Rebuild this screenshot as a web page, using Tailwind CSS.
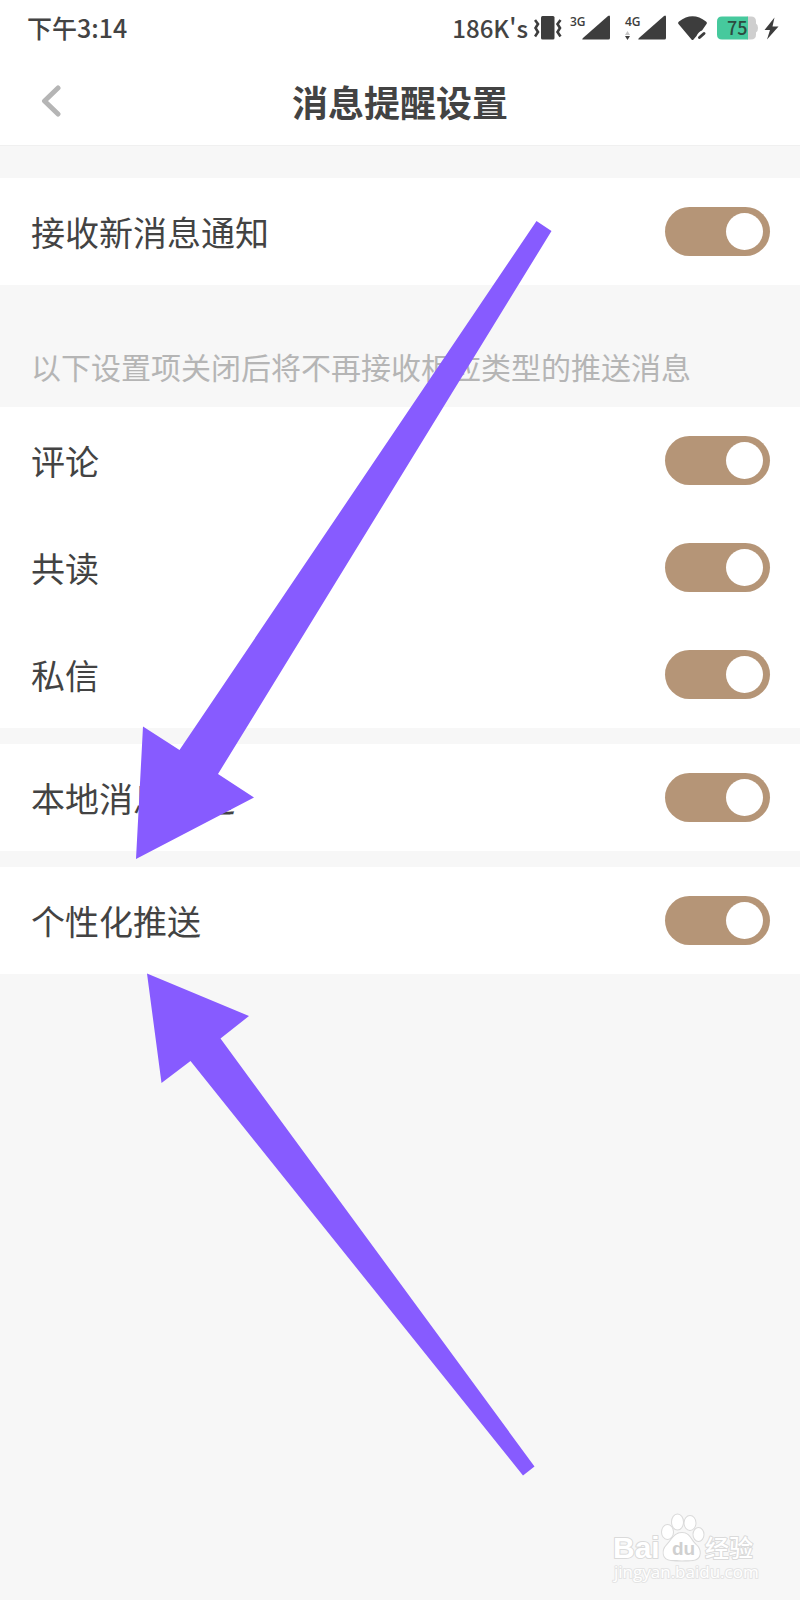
<!DOCTYPE html>
<html lang="zh-CN">
<head>
    <meta charset="UTF-8">
    <meta name="viewport" content="width=device-width, initial-scale=1.0">
    <title>消息提醒设置</title>
    <script src="https://cdn.jsdelivr.net/npm/@tailwindcss/browser@4"></script>
</head>
<body class="relative min-h-screen overflow-x-hidden bg-[#f7f7f7] font-['Noto_Sans_CJK_SC',sans-serif] text-[#434343]">
    <!-- Status bar -->
    <div class="flex h-14 items-center justify-between bg-white pr-[21px] pl-[27px] text-[25px] font-medium">
        <span>下午3:14</span>
        <div class="flex items-center gap-1.5">
            <span class="text-2xl">186K's</span>
            <svg class="h-6 w-[30px]" viewBox="0 0 30 24" fill="none" stroke="#3d3d3d" stroke-width="2.6">
                <rect x="7" y="0" width="13.500" height="23.500" rx="1.5" fill="#3d3d3d" stroke="none"/>
                <path d="M1 4 4 8 1.500 12 4 16 1 20.500M26.500 4 23.500 8 26 12 23.500 16 26.500 20.500"/>
            </svg>
            <svg class="h-6 w-12 overflow-visible" viewBox="0 0 48 24" fill="#3d3d3d">
                <text x="0" y="10" font-family="Open Sans" font-size="12" font-weight="600">3G</text>
                <path d="M13 23.500Q11.500 23.500 13 22L38 0Q40 -1.500 40 1V22q0 1.500-1.500 1.500z"/>
            </svg>
            <svg class="h-6 w-12 overflow-visible" viewBox="0 0 48 24" fill="#3d3d3d">
                <text x="1" y="10" font-family="Open Sans" font-size="12" font-weight="600">4G</text>
                <path d="M15 23.500Q13.500 23.500 15 22L40 0Q42 -1.500 42 1V22q0 1.500-1.500 1.500z"/>
                <path d="M1 19h5L3.500 15z" fill="#c4c4c4"/>
                <path d="M1 20h5L3.500 24z"/>
            </svg>
            <svg class="h-6 w-[33px]" viewBox="0 0 33 24" fill="#3d3d3d">
                <path d="M.5 8Q-.5 6.500 1 5.500Q14.500 -5 28 5.500Q29.500 6.500 28.500 8L24 14.500Q20.500 15.500 18.500 20L15.500 23.500Q14.500 24.500 13.500 23.500z"/>
                <path d="M21.500 21.500 26 17.500" stroke="#3d3d3d" stroke-width="3" stroke-linecap="round"/>
            </svg>
            <svg class="h-6 w-[41px] overflow-visible" viewBox="0 0 41 24">
                <path d="M30 .5h4q5 0 5 5V7.500q2 1 2 4.500t-2 4.500v2q0 5-5 5h-4z" fill="#cfcfcf"/>
                <path d="M31 .5H5Q0 .5 0 5.500v13q0 5 5 5h26z" fill="#46c99d"/>
                <text x="10" y="18.500" font-size="18" font-weight="500" fill="#2d4a40">75</text>
            </svg>
            <svg class="h-6 w-[15px]" viewBox="0 0 15 24" fill="#3d3d3d">
                <path d="M10.500 1.500 .5 14H6L3 23.500 14.500 10.500H8.500z"/>
            </svg>
        </div>
    </div>

    <!-- Title bar -->
    <header class="grid h-[89px] grid-cols-[1fr_auto_1fr] items-center bg-white px-10">
        <button type="button" aria-label="返回" class="justify-self-start">
            <svg class="h-8 w-6" viewBox="0 0 24 32" fill="none" stroke="#b5b5b5" stroke-width="5" stroke-linecap="round" stroke-linejoin="round">
                <path d="M18 3 4.500 16 18 29"/>
            </svg>
        </button>
        <h1 class="text-[36px] leading-none font-bold">消息提醒设置</h1>
    </header>

    <!-- Settings -->
    <main class="border-t border-[#f0f0f0] pt-8 text-[34px] leading-none">
        <div class="flex h-[107px] items-center justify-between bg-white pr-[30px] pl-[31px]">
            <label for="notify">接收新消息通知</label>
            <input id="notify" type="checkbox" role="switch" checked class="flex h-[49px] w-[105px] appearance-none items-center rounded-full bg-[#c8c8c8] px-[7px] before:size-[37px] before:rounded-full before:bg-white checked:justify-end checked:bg-[#b59577]">
        </div>

        <p class="flex h-[122px] items-end pb-[26px] pl-[31px] text-[30px] leading-none whitespace-nowrap text-[#b5b5b5]">以下设置项关闭后将不再接收相应类型的推送消息</p>

        <div class="flex flex-col gap-4">
            <section class="bg-white">
                <div class="flex h-[107px] items-center justify-between pr-[30px] pl-[31px]">
                    <label for="comment">评论</label>
                    <input id="comment" type="checkbox" role="switch" checked class="flex h-[49px] w-[105px] appearance-none items-center rounded-full bg-[#c8c8c8] px-[7px] before:size-[37px] before:rounded-full before:bg-white checked:justify-end checked:bg-[#b59577]">
                </div>
                <div class="flex h-[107px] items-center justify-between pr-[30px] pl-[31px]">
                    <label for="coread">共读</label>
                    <input id="coread" type="checkbox" role="switch" checked class="flex h-[49px] w-[105px] appearance-none items-center rounded-full bg-[#c8c8c8] px-[7px] before:size-[37px] before:rounded-full before:bg-white checked:justify-end checked:bg-[#b59577]">
                </div>
                <div class="flex h-[107px] items-center justify-between pr-[30px] pl-[31px]">
                    <label for="message">私信</label>
                    <input id="message" type="checkbox" role="switch" checked class="flex h-[49px] w-[105px] appearance-none items-center rounded-full bg-[#c8c8c8] px-[7px] before:size-[37px] before:rounded-full before:bg-white checked:justify-end checked:bg-[#b59577]">
                </div>
            </section>
            <section class="flex h-[107px] items-center justify-between bg-white pr-[30px] pl-[31px]">
                <label for="local">本地消息推送</label>
                <input id="local" type="checkbox" role="switch" checked class="flex h-[49px] w-[105px] appearance-none items-center rounded-full bg-[#c8c8c8] px-[7px] before:size-[37px] before:rounded-full before:bg-white checked:justify-end checked:bg-[#b59577]">
            </section>
            <section class="flex h-[107px] items-center justify-between bg-white pr-[30px] pl-[31px]">
                <label for="personal">个性化推送</label>
                <input id="personal" type="checkbox" role="switch" checked class="flex h-[49px] w-[105px] appearance-none items-center rounded-full bg-[#c8c8c8] px-[7px] before:size-[37px] before:rounded-full before:bg-white checked:justify-end checked:bg-[#b59577]">
            </section>
        </div>
    </main>

    <!-- Arrows pointing at the last row -->
    <svg class="pointer-events-none absolute top-0 left-0 h-[1500px] w-[600px]" viewBox="0 0 600 1500" fill="#875bff">
        <path d="M536.500 221 551.500 231 218 774 254 797.500 136 859 143 726.500 179.500 750z"/>
        <path d="M147 973.500 249 1016 220.500 1038.500 534.500 1466.500 523 1475.500 190.500 1061 161.500 1083z"/>
    </svg>

    <!-- Watermark -->
    <svg class="pointer-events-none absolute right-10 bottom-4 h-[72px] w-[150px] overflow-visible" viewBox="0 0 150 72" fill="#fff" stroke="#dadada" stroke-width="2" paint-order="stroke" stroke-linejoin="round">
        <text x="3" y="46" font-family="Liberation Sans" font-size="30" font-weight="700">Bai</text>
        <ellipse cx="57.500" cy="20" rx="5.500" ry="7"/>
        <ellipse cx="67.500" cy="10" rx="5.500" ry="7.500"/>
        <ellipse cx="80" cy="11" rx="5.500" ry="7"/>
        <ellipse cx="88.500" cy="22.500" rx="5" ry="6.500"/>
        <path d="M72 21c8 0 9 8 14 12s6 14-3 15c-5 .5-17 .5-22 0-9-1-9-10-4-15s7-12 15-12z"/>
        <text x="62" y="43" font-family="Liberation Sans" font-size="19" font-weight="700" fill="#d0d0d0" stroke="none">du</text>
        <text x="95" y="45" font-size="24" font-weight="500">经验</text>
        <text x="4" y="66" font-family="Open Sans" font-size="17" stroke="#e4e4e4">jingyan.baidu.com</text>
    </svg>
</body>
</html>
